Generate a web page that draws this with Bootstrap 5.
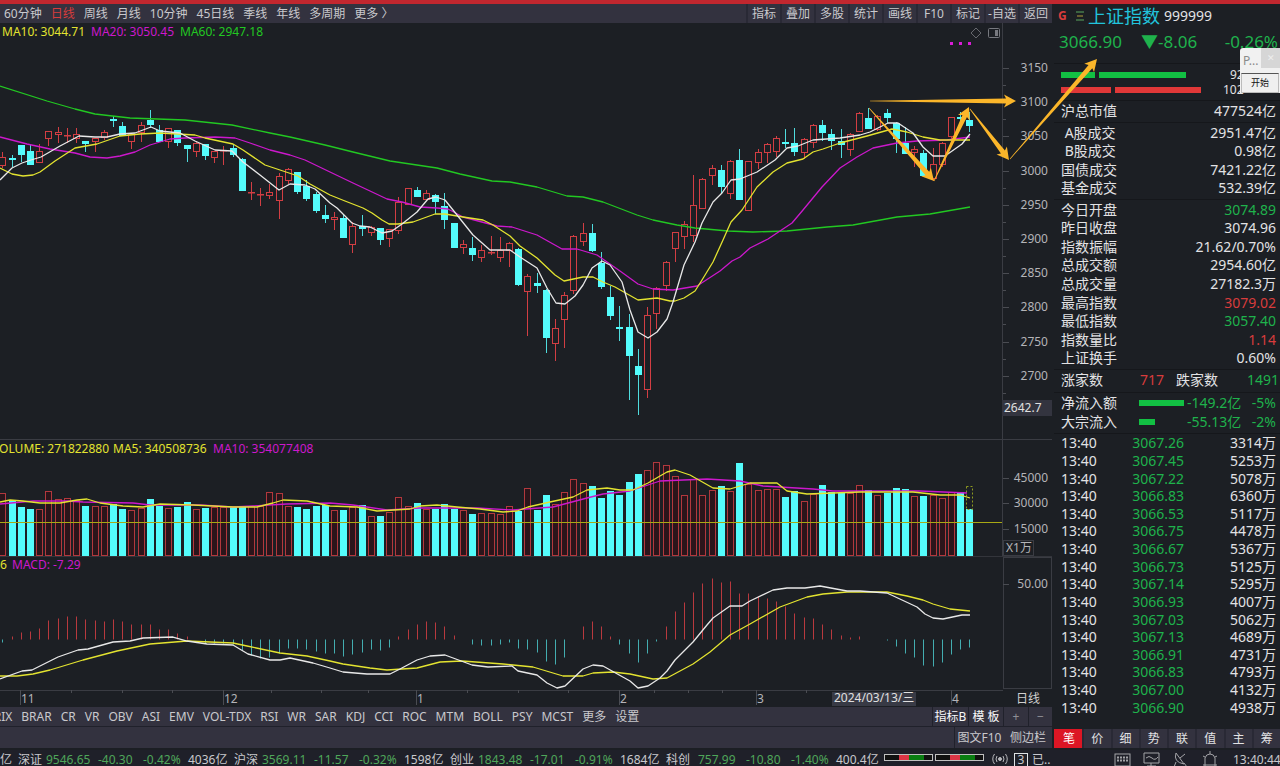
<!DOCTYPE html>
<html lang="zh-CN">
<head>
<meta charset="utf-8">
<meta name="viewport" content="width=device-width, initial-scale=1">
<title>上证指数 999999</title>
<link href="https://cdn.jsdelivr.net/npm/bootstrap@5.3.0/dist/css/bootstrap.min.css" rel="stylesheet">
<style>
:root{--bg:#1c1f24;--bar:#33323f;--edge:#20212b;--txt:#c9c9cd;--up:#d83c3c;--down:#1fb24c}
body{background:var(--bg);color:var(--txt);font:12px/18px "Noto Sans","Noto Sans CJK SC",sans-serif;overflow:hidden;border-top:4px solid #c1272f}
button{background:none;border:0;padding:0;color:inherit;font:inherit;white-space:nowrap}
.terminal{display:grid;grid-template-columns:minmax(0,1fr) 226px;column-gap:2px}
.strip{background:var(--bar);height:19px;overflow:hidden;white-space:nowrap}
.cells button{width:34px;border-left:2px solid #292935}
.periods{gap:9px;padding-left:4px}
.indicators{gap:9px;margin-left:-13px}
.sep button{border-left:1px solid var(--edge)}
.tall{height:22px;line-height:20px}
.dim{color:#8f8f96!important}
.plot{display:block;width:100%;height:auto}
.plot text{font-size:12px;fill:#b4b4b8}
.side{font-size:14px;line-height:18px;color:#e2e2e4}
.side section{border-bottom:1px solid #15171b}
.side table{width:100%;border-collapse:collapse}
.side td,.side th{padding:0;font-weight:400;line-height:17px;white-space:nowrap}
.side th{padding-left:7px}
.side td{text-align:right;padding-right:4px}
.side .roomy th,.side .roomy td{line-height:20px}
.block-end{padding-bottom:2px}
#ticks th{width:60px}
#ticks .down{width:74px}
.flows{table-layout:fixed}
.up{color:var(--up)!important}.down{color:var(--down)!important}
.title-name{font-size:18px;color:#22c4dc}
.quote{height:36px;font-size:17px;padding:5px 2px 0 5px}
.fill{height:6px}
.gauge{height:15px;padding-left:7px;font-size:12px}
.bg-down{background:#12c043}.bg-up{background:#e03838}
.tabs button{flex:1 1 0;border-left:2px solid #292935;font-size:12px;line-height:18px}
.tabs button.on{background:#dc1624;color:#fff;border-color:#dc1624}
.status{background:#1f2029;height:20px;line-height:20px;white-space:nowrap}
.market{display:grid;grid-template-columns:28px 52px 45px 45px 46px}
.market .g{color:#4fa65a}
.meter{width:49px;height:7px;border:1px solid #c0c0c0;display:flex;background:#111}
.overlay{position:absolute;left:0;top:0;width:100%;height:auto;pointer-events:none}
.popup{position:absolute;right:0;top:48px;width:40px;height:45px;background:#f1f1f1;color:#8a8a8a;border-radius:3px 0 0 0}
.popup .cap{height:25px;line-height:25px;padding-left:3px}
.popup .x{width:19px;height:20px;background:#d6d6d6;color:#eee;line-height:20px;font-size:9px}
.popup .go{display:block;width:38px;height:20px;margin-left:1px;background:#efefef;border:1px solid #bbb;border-top-color:#555;color:#111;font-size:9px;line-height:18px}
</style>
</head>
<body>
<div class="terminal">
<main>
  <div class="strip d-flex justify-content-between">
    <nav class="d-flex periods"><button>60分钟</button><button class="up">日线</button><button>周线</button><button>月线</button><button>10分钟</button><button>45日线</button><button>季线</button><button>年线</button><button>多周期</button><button>更多 〉</button></nav>
    <nav class="d-flex cells"><button>指标</button><button>叠加</button><button>多股</button><button>统计</button><button>画线</button><button>F10</button><button>标记</button><button>-自选</button><button>返回</button></nav>
  </div>
  <svg class="plot" id="price" viewBox="0 23 1052 417" role="img" aria-label="K线图"></svg>
  <svg class="plot" id="volume" viewBox="0 440 1052 117" role="img" aria-label="成交量"></svg>
  <svg class="plot" id="macd" viewBox="0 557 1052 133" role="img" aria-label="MACD"></svg>
  <svg class="plot" id="dates" viewBox="0 690 1052 17" role="img" aria-label="日期"></svg>
  <div class="strip d-flex justify-content-between">
    <nav class="d-flex indicators"><button>TRIX</button><button>BRAR</button><button>CR</button><button>VR</button><button>OBV</button><button>ASI</button><button>EMV</button><button>VOL-TDX</button><button>RSI</button><button>WR</button><button>SAR</button><button>KDJ</button><button>CCI</button><button>ROC</button><button>MTM</button><button>BOLL</button><button>PSY</button><button>MCST</button><button>更多</button><button>设置</button></nav>
    <nav class="d-flex sep text-light"><button style="width:36px">指标B</button><button style="width:35px">模 板</button><button class="dim" style="width:25px">+</button><button class="dim" style="width:24px">−</button></nav>
  </div>
  <div class="strip tall d-flex justify-content-end sep" style="border-top:1px solid #20212b"><button style="width:50px">图文F10</button><button style="width:48px;border:0">侧边栏</button></div>
</main>

<aside class="side d-flex flex-column">
  <div class="d-flex align-items-center" style="height:24px;padding-left:4px">
    <span class="up fw-bold" style="font-size:12px;width:18px">G</span>
    <svg width="8" height="10" class="me-1" aria-hidden="true"><path d="M0 1h8M0 9h8" stroke="#5aa85e"/><path d="M1 5h6" stroke="#b0a03a"/></svg>
    <span class="title-name me-1">上证指数</span><span>999999</span>
  </div>
  <section class="quote d-flex down"><span style="width:82px">3066.90</span><span>▼-8.06</span><span class="ms-auto">-0.26%</span></section>
  <section style="height:37px;padding-top:3px">
    <div class="gauge d-flex align-items-center"><i class="fill bg-down me-1" style="width:34px"></i><i class="fill bg-down" style="width:87px"></i><span class="ms-auto" style="width:50px">92</span></div>
    <div class="gauge d-flex align-items-center"><i class="fill bg-up me-1" style="width:50px"></i><i class="fill bg-up" style="width:86px"></i><span class="ms-auto" style="width:57px">102</span></div>
  </section>
  <section style="height:22px"><table class="roomy"><tr><th>沪总市值</th><td>477524亿</td></tr></table></section>
  <section class="block-end"><table style="height:74px" id="turnover"></table></section>
  <section class="block-end"><table style="height:167px" id="stats"></table></section>
  <section style="height:23px"><table class="roomy flows"><tr><th style="width:60px">涨家数</th><td class="up" style="width:54px">717</td><th style="padding-left:8px">跌家数</th><td class="down" style="width:50px;padding-right:1px">1491</td></tr></table></section>
  <section class="block-end"><table class="flows" style="height:38px">
    <tr><th style="width:85px">净流入额</th><td style="width:48px"><div class="fill bg-down" style="width:45px"></div></td><td class="down" style="width:57px">-149.2亿</td><td class="down">-5%</td></tr>
    <tr><th>大宗流入</th><td><div class="fill bg-down" style="width:16px"></div></td><td class="down">-55.13亿</td><td class="down">-2%</td></tr>
  </table></section>
  <table style="height:282px" id="ticks"></table>
  <nav class="strip tabs d-flex mt-auto"><button class="on">笔</button><button>价</button><button>细</button><button>势</button><button>联</button><button>值</button><button>主</button><button>筹</button></nav>
</aside>
</div>

<footer class="status d-flex" style="margin-top:2px">
  <span style="width:18px">亿</span>
  <div class="market"><span>深证</span><span class="g">9546.65</span><span class="g">-40.30</span><span class="g">-0.42%</span><span>4036亿</span></div>
  <div class="market"><span>沪深</span><span class="g">3569.11</span><span class="g">-11.57</span><span class="g">-0.32%</span><span>1598亿</span></div>
  <div class="market"><span>创业</span><span class="g">1843.48</span><span class="g">-17.01</span><span class="g">-0.91%</span><span>1684亿</span></div>
  <div class="market"><span>科创</span><span class="g ps-1">757.99</span><span class="g">-10.80</span><span class="g">-1.40%</span><span>400.4亿</span></div>
  <div class="d-flex pt-1" style="gap:2px;padding-left:2px">
    <div class="meter"><i style="width:14px"></i><i class="bg-danger" style="width:10px"></i><i style="width:15px;background:#0a7d12"></i></div>
    <div class="meter"><i style="width:14px"></i><i class="bg-danger" style="width:10px"></i><i style="width:15px;background:#0a7d12"></i></div>
  </div>
  <svg width="16" height="16" class="ms-2" fill="none" stroke="#b8b8bc" aria-hidden="true"><circle cx="8" cy="9" r="1.500" fill="#b8b8bc"/><path d="M5 6q-2 3 0 6M11 6q2 3 0 6M2.500 4q-3.500 5 0 10M13.500 4q3.500 5 0 10"/></svg>
  <span class="border text-center" style="margin:3px 4px 0 6px;width:14px;height:14px;line-height:12px">3</span><span>已..</span>
  <div class="ms-auto d-flex">
    <svg width="104" height="16" fill="none" stroke="#a4a4a8" aria-hidden="true"><rect x="1" y="4" width="15" height="12"/><path d="M3 7.500h11M3 10.500h11" stroke-dasharray="2 1" stroke-width="2"/><path d="M30 3h15v10h-15zM37 13v4M33 16h9M32 8q3-3 6 0t6-1"/><path d="M62 3q-3 9 8 11zM66 8l5-4M62 12l-2 5M70 13l3 4"/><path d="M91 16V8q1-4 5-4t5 4v8M96 4V1M89 6l2 1M103 6l-2 1M89 15h14"/></svg>
    <span style="width:62px;padding-left:15px">13:40:44</span>
  </div>
</footer>

<svg class="overlay" id="arrows" viewBox="0 0 1280 766" aria-hidden="true"></svg>
<div class="popup"><div class="cap d-flex"><span>P...</span><span class="x ms-auto text-center">✕</span></div><button class="go">开始</button></div>

<script src="https://cdn.jsdelivr.net/npm/bootstrap@5.3.0/dist/js/bootstrap.bundle.min.js"></script>
<script>
const $ = id => document.getElementById(id);
const X = i => Math.round(3.4 + i * 9.21);
const CYAN = '#54fcfc', RED = '#d23e43';
const text = (x, y, s, fill, anchor) => `<text x="${x}" y="${y}" ${fill ? `style="fill:${fill}"` : ''} text-anchor="${anchor || 'start'}">${s}</text>`;
const line = (x1, y1, x2, y2, c) => `<path d="M${x1} ${y1}L${x2} ${y2}" stroke="${c}" fill="none"/>`;
const stem = (x, y1, y2, c) => line(x + .5, y1, x + .5, y2, c);
const curve = (pts, c) => `<polyline points="${pts}" fill="none" stroke="${c}" stroke-width="1.300" stroke-linejoin="round"/>`;

/* direction, high, body top, body bottom, low */
const candles = `r152,157,166,168 c155,158,160,167 c145,145,155,162 c144,151,165,165 r144,151,163,163 r131,131,139,146 r127,132,135,143 r128,135,136,143 r128,134,139,143 c141,141,144,152 r138,138,142,152 r130,132,138,140 c116,119,121,127 c122,126,136,136 r134,134,142,149 r122,125,133,142 c110,120,125,128 c125,130,142,142 r128,128,142,148 c130,130,143,146 c145,145,149,162 r141,143,152,157 c144,144,156,160 r151,151,158,163 r146,150,151,165 c144,148,155,157 c158,159,191,191 r182,192,193,200 r188,194,195,206 r184,192,196,199 r173,176,201,219 r168,169,181,184 c172,172,192,194 c180,186,199,201 c192,194,211,213 c205,215,219,223 r212,217,220,230 c215,218,238,238 r222,226,245,253 c215,226,229,236 r226,227,233,236 c228,228,240,245 r229,229,239,247 r197,202,231,234 r188,188,205,205 c187,190,197,197 r190,193,200,201 c194,195,202,214 c193,206,220,229 c223,223,248,248 r240,244,248,254 c237,248,255,261 r245,250,258,262 r236,252,253,255 r237,250,258,262 r242,243,251,267 c248,249,285,286 r274,276,292,336 c273,283,286,293 c289,290,338,353 r319,328,344,361 r292,295,320,348 r235,236,291,294 r223,233,242,246 c224,233,251,252 c252,263,287,289 c286,297,316,320 c306,327,329,341 c314,327,356,400 c349,366,375,415 r307,315,390,398 r287,288,314,329 r261,262,286,291 r232,232,249,262 r221,224,237,249 r175,205,236,242 r178,179,209,209 r165,168,176,185 c165,170,187,193 r160,161,194,199 c149,160,200,200 r161,161,211,211 r149,152,163,169 r143,144,153,163 r136,138,152,157 c129,142,144,148 c128,143,152,156 r138,139,153,159 r124,125,143,148 c120,125,133,141 c129,134,141,150 c129,141,145,158 r133,134,150,156 r112,113,132,132 c108,118,129,129 r115,116,130,131 c109,113,118,123 c122,123,139,153 c127,143,154,154 r146,149,153,167 c150,153,176,177 r148,164,179,181 r142,143,165,167 r117,117,137,139 c112,117,119,128 c112,120,126,132`.split(/\s+/).map(s => [s[0], ...s.slice(1).split(',').map(Number)]);

let s = '';
candles.forEach(([d, h, t, b, l], i) => {
  const x = X(i);
  if (d === 'c') s += stem(x - 1, h, l, '#4fdcde') + `<rect x="${x - 4}" y="${t}" width="7" height="${b - t}" fill="${CYAN}"/>`;
  else s += stem(x - 1, h, t, RED) + stem(x - 1, b, l, RED) + `<rect x="${x - 3.5}" y="${t + .5}" width="6" height="${Math.max(b - t - 1, .5)}" fill="none" stroke="${RED}"/>`;
});
s += curve('0,86 47,101 75,109 95,114 130,118 185,120 232,125 270,133 290,137 325,145 353,152 390,161 437,168 460,174 492,181 510,182 537,187 567,196 583,197 603,202 637,215 653,220 677,225 695,228 728,231 753,232 787,231 827,227 853,225 897,217 930,214 970,207', '#22c822');
s += curve('0,137 27,144 50,149 75,153 90,157 107,158 120,156 135,152 150,145 170,139 185,138 215,137 235,138 250,143 270,150 290,155 305,160 330,172 353,183 370,191 387,199 402,202 420,207 437,208 448,209 463,217 497,226 512,227 537,235 562,249 577,249 597,255 620,271 638,284 653,289 673,290 697,286 720,271 732,261 740,257 750,248 768,239 783,229 792,223 803,210 822,187 840,168 857,157 873,148 897,143 917,141 947,140 970,137', '#cc18cc');
s += curve('0,168 12,174 23,176 33,175 40,172 55,161 75,148 97,144 120,136 140,134 160,133 195,135 205,138 233,144 243,150 265,165 280,170 298,176 310,184 330,195 345,201 363,208 372,213 382,220 389,224 398,224 413,222 435,214 445,214 463,217 483,220 493,225 510,236 520,246 537,258 555,275 564,281 583,277 593,277 603,282 615,287 638,300 657,298 670,301 675,301 684,298 695,291 702,280 713,262 723,240 731,222 742,210 757,187 773,172 787,163 803,159 813,152 823,149 840,143 867,136 892,129 907,132 923,137 940,140 970,140', '#e3e330');
s += curve('0,180 12,168 22,163 31,160 41,157 60,146 79,136 95,137 107,137 120,134 135,133 151,127 160,131 170,132 180,133 195,141 215,150 232,151 243,162 260,175 279,190 290,184 305,185 315,189 330,203 337,208 352,223 360,226 370,227 382,233 392,231 402,224 417,212 428,199 436,197 445,200 457,215 473,235 490,250 510,250 520,257 537,268 547,288 556,303 565,304 575,296 583,285 592,268 602,261 610,265 622,282 630,310 638,332 648,338 657,332 667,319 673,302 684,265 695,242 702,223 713,202 722,193 731,180 740,179 757,172 775,160 787,148 798,146 813,140 840,138 860,135 870,132 888,123 898,123 913,133 923,147 933,156 945,156 962,144 970,134', '#e8e8e8');
s += line(1002.5, 23, 1002.5, 440, '#3a3c43');
for (let k = 0; k < 10; k++) {
  const y = Math.round(68 + k * 34.2);
  s += line(1003, y + .5, 1009, y + .5, '#4a4c52') + line(1003, y + 17.5, 1006, y + 17.5, '#4a4c52') + text(1048, y + 4, 3150 - k * 50, '', 'end');
}
s += `<rect x="1002" y="400" width="50" height="16" fill="#33343f"/>` + text(1004, 412, '2642.7', '#e0e0e0');
s += text(2, 36, 'MA10: 3044.71', '#e3e330') + text(91, 36, 'MA20: 3050.45', '#cc18cc') + text(180, 36, 'MA60: 2947.18', '#22c822');
s += '<path d="M976 28l5 5-5 5-5-5z" fill="none" stroke="#66686e"/><rect x="988.500" y="28.500" width="11" height="9" rx="1" fill="none" stroke="#77797f"/><path d="M995 30h3v6h-3z" fill="#77797f"/>';
s += '<path d="M950 42h3v3h-3zM959 42h3v3h-3zM968 42h3v3h-3z" fill="#d81cd8"/>' + line(0, 439.5, 1052, 439.5, '#3a3c43');
$('price').innerHTML = s;

const vol = [493,501,507,509,509,491,499,498,500,506,506,506,504,509,510,508,499,506,508,507,502,509,508,507,507,507,506,506,506,492,493,506,507,509,506,505,510,510,507,505,516,516,512,497,506,503,509,509,504,509,510,514,513,513,514,506,511,488,510,495,504,492,479,483,486,498,491,495,482,474,470,462,465,476,495,479,495,490,486,491,463,484,490,489,489,497,491,501,494,485,492,493,493,485,490,495,493,488,489,496,496,495,498,492,492,509];
s = '';
vol.forEach((y, i) => {
  const x = X(i);
  s += candles[i][0] === 'c' ? `<rect x="${x - 4}" y="${y}" width="7" height="${556 - y}" fill="${CYAN}"/>` : `<rect x="${x - 3.5}" y="${y + .5}" width="6" height="${555 - y}" fill="#2b151b" stroke="#b2383d"/>`;
});
s += '<rect x="966.500" y="486.500" width="6" height="23" fill="none" stroke="#8d9a20" stroke-dasharray="2 2"/>';
s += line(0, 522.5, 1003, 522.5, '#a8a814');
s += curve('0,504 33,501 67,501 83,502 133,503 150,505 200,505 233,507 253,506 287,504 330,503 353,505 387,510 420,508 477,508 513,510 553,507 587,498 603,494 630,491 660,481 707,479 740,481 763,486 813,489 833,491 920,491 967,493', '#cc18cc');
s += curve('0,502 10,500 23,501 40,503 60,503 77,500 87,499 100,503 123,506 143,507 160,504 193,505 233,507 257,507 273,503 283,500 307,501 330,506 357,507 377,511 410,509 420,506 437,505 457,507 480,509 503,512 517,511 528,507 550,502 573,497 587,490 607,488 620,490 633,490 648,483 660,476 667,472 675,470 690,475 713,488 730,489 750,483 777,483 787,491 807,494 860,492 913,492 940,495 960,495 970,498', '#e3e330');
s += line(1002.5, 440, 1002.5, 557, '#3a3c43') + line(0, 556.5, 1052, 556.5, '#33353b');
[[478, 45000], [503, 30000], [529, 15000]].forEach(([y, v]) => s += line(1003, y + .5, 1009, y + .5, '#4a4c52') + text(1048, y + 4, v, '', 'end'));
s += '<rect x="1003.500" y="540.500" width="30" height="15" fill="none" stroke="#3a3c43"/>' + text(1006, 552, 'X1万');
s += text(-8, 453, 'VOLUME: 271822880', '#e3e330') + text(113, 453, 'MA5: 340508736', '#e3e330') + text(213, 453, 'MA10: 354077408', '#cc18cc');
$('volume').innerHTML = s;

const hist = [3,-3,-7,-8,-11,-19,-21,-23,-23,-20,-19,-18,-20,-18,-15,-15,-15,-10,-10,-6,-3,0,4,4,4,5,11,16,19,18,14,9,9,10,12,14,14,17,15,13,10,11,8,-3,-10,-15,-18,-17,-13,-4,0,5,6,6,5,3,9,10,13,22,25,18,0,-13,-18,-13,-3,5,14,23,14,2,-13,-28,-37,-47,-56,-61,-57,-58,-46,-46,-43,-41,-38,-33,-26,-22,-21,-15,-10,-4,-2,-3,0,0,1,7,14,18,26,27,23,15,10,8];
s = '';
hist.forEach((v, i) => { if (v) s += stem(X(i) - 1, 639.5, 639.5 + v, v > 0 ? '#43adb0' : '#b8393e'); });
s += curve('0,676 17,676 33,674 50,670 83,660 117,651 150,644 187,641 233,643 247,646 280,653 307,656 330,661 343,664 370,668 387,670 417,668 440,662 462,661 503,664 533,667 563,676 583,676 593,673 613,672 630,674 653,679 667,678 693,664 710,652 730,635 750,624 780,607 807,597 823,594 847,592 887,592 907,596 923,600 933,604 950,609 970,611', '#e3e330');
s += curve('0,679 22,671 32,670 58,657 78,650 88,649 113,642 130,641 143,638 173,637 187,641 207,644 233,645 248,654 270,660 280,660 290,658 313,663 330,668 343,672 367,674 390,674 400,669 417,660 430,656 445,655 472,665 488,667 512,666 518,671 537,675 547,683 557,688 565,686 583,669 593,665 603,666 630,681 638,688 648,686 660,678 667,671 675,660 693,642 707,625 713,618 730,606 742,606 750,601 773,590 787,588 805,588 820,586 847,591 860,591 887,593 917,607 925,614 933,618 943,619 962,615 970,615', '#e8e8e8');
s += text(0, 569, '6', '#e3e330') + text(12, 569, 'MACD: -7.29', '#cc18cc');
s += '<rect x="1003.500" y="557.500" width="48" height="131" fill="none" stroke="#3a3c43"/>' + line(1003, 584.5, 1009, 584.5, '#4a4c52') + text(1048, 588, '50.00', '', 'end');
$('macd').innerHTML = s;

s = line(0, 690.5, 1003, 690.5, '#3a3c43');
[71, 122, 172, 271, 321, 368, 467, 518, 568, 654, 688, 722, 806].forEach(x => s += line(x + .5, 690, x + .5, 693, '#4a4c52'));
[[20, 11], [223, 12], [416, 1], [619, 2], [756, 3], [951, 4]].forEach(([x, m]) => s += line(x + .5, 690, x + .5, 705, '#4a4c52') + text(x + 1, 703, m));
s += '<rect x="832" y="692" width="84" height="14" fill="#383a45"/>' + text(834, 702, '2024/03/13/三', '#e0e0e0') + text(1016, 703, '日线', '#d0d0d0');
$('dates').innerHTML = s;

const rows = (id, list) => $(id).innerHTML = list.map(([n, v, c]) => `<tr><th>${n}</th><td class="${c || ''}">${v}</td></tr>`).join('');
rows('turnover', [['&nbsp;A股成交', '2951.47亿'], ['&nbsp;B股成交', '0.98亿'], ['国债成交', '7421.22亿'], ['基金成交', '532.39亿']]);
rows('stats', [['今日开盘', '3074.89', 'down'], ['昨日收盘', '3074.96'], ['指数振幅', '21.62/0.70%'], ['总成交额', '2954.60亿'], ['总成交量', '27182.3万'], ['最高指数', '3079.02', 'up'], ['最低指数', '3057.40', 'down'], ['指数量比', '1.14', 'up'], ['上证换手', '0.60%']]);
$('ticks').innerHTML = [['67.26', 3314], ['67.45', 5253], ['67.22', 5078], ['66.83', 6360], ['66.53', 5117], ['66.75', 4478], ['66.67', 5367], ['66.73', 5125], ['67.14', 5295], ['66.93', 4007], ['67.03', 5062], ['67.13', 4689], ['66.91', 4731], ['66.83', 4793], ['67.00', 4132], ['66.90', 4938]]
  .map(([p, v]) => `<tr><th>13:40</th><td class="down">30${p}</td><td>${v}万</td></tr>`).join('');

/* tapered arrow from tail to tip */
const arrow = (x1, y1, x2, y2) => {
  const L = Math.hypot(x2 - x1, y2 - y1), a = Math.atan2(y2 - y1, x2 - x1) * 180 / Math.PI;
  return `<path transform="translate(${x1} ${y1}) rotate(${a})" fill="#fbb62a" d="M0 -.3L${L - 10} -2.500L${L - 12} -6.500L${L} 0L${L - 12} 6.500L${L - 10} 2.500L0 .3z"/>`;
};
$('arrows').innerHTML = arrow(870, 101, 1016, 101) + arrow(869, 108, 934, 181) + arrow(934, 181, 969, 107) + arrow(970, 109, 1009, 160) + arrow(1010, 159, 1097, 59);
</script>
</body>
</html>
